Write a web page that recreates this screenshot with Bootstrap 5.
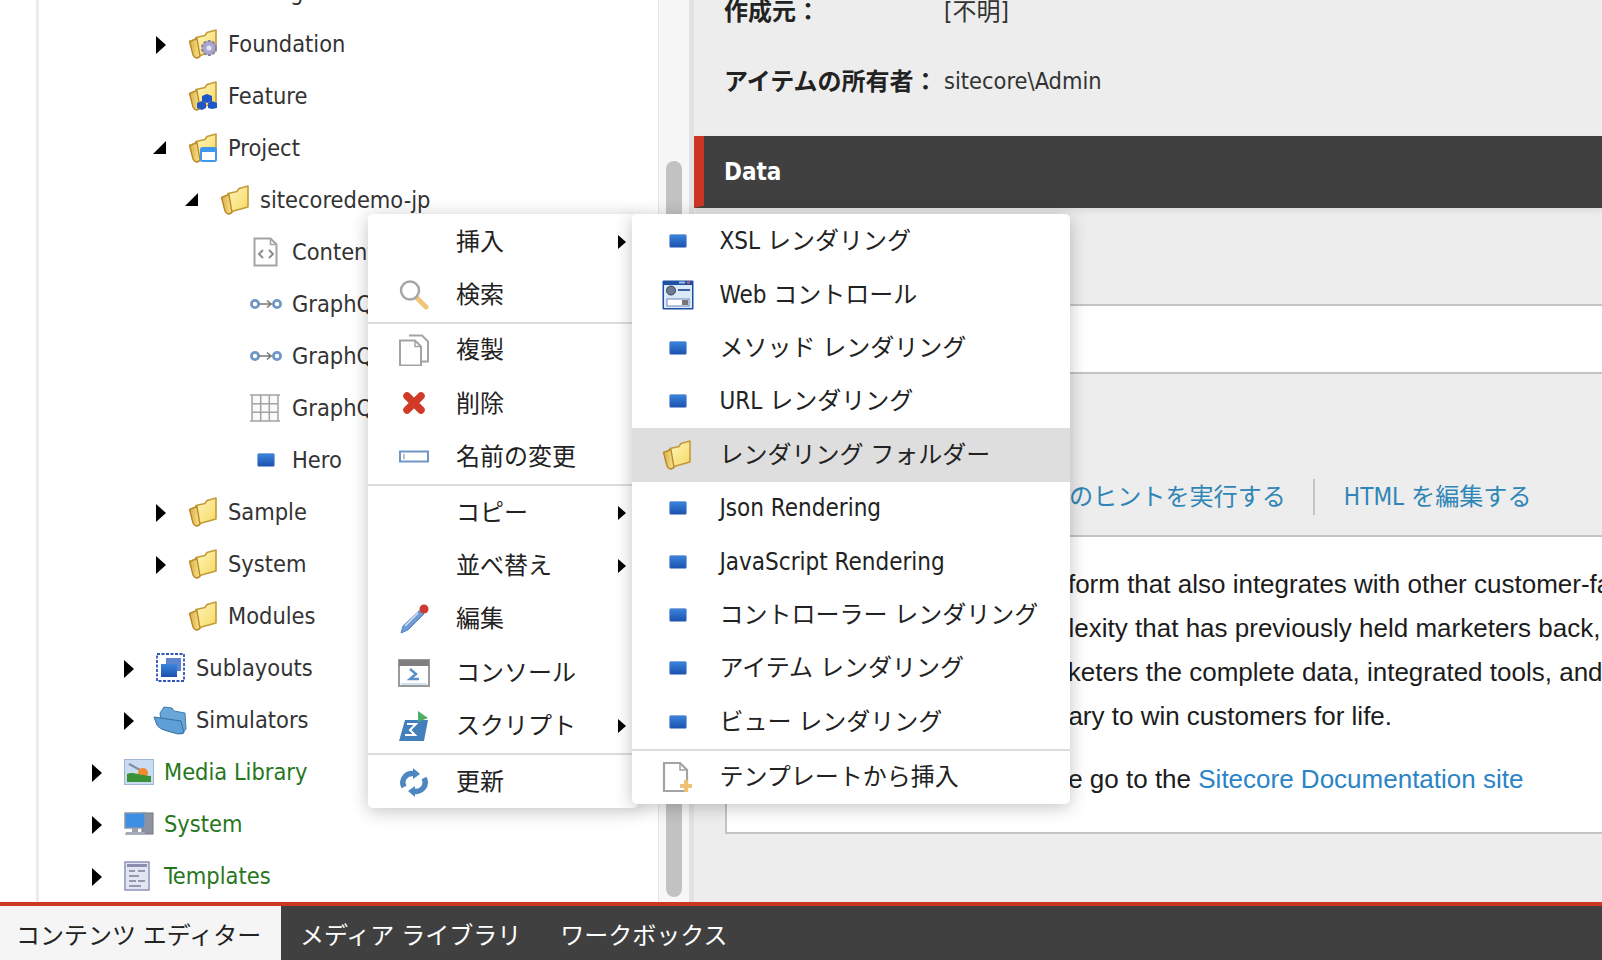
<!DOCTYPE html>
<html lang="ja">

<head>
  <meta charset="UTF-8">
  <title>コンテンツ エディター</title>
  <link href="https://cdn.jsdelivr.net/npm/bootstrap@5.3.3/dist/css/bootstrap.min.css" rel="stylesheet">
  <style>
    html,
    body {
      height: 100%;
      overflow: hidden;
    }

    body {
      font-family: "DejaVu Sans Condensed", "DejaVu Sans", "Noto Sans CJK JP", sans-serif;
      font-size: 23.4px;
      color: #333;
      background: #fff;
    }

    svg {
      filter: blur(.3px);
    }

    .shell-main {
      height: 902px;
      overflow: hidden;
    }

    /* left tree */
    .tree-pane {
      width: 658px;
      flex: none;
      background: linear-gradient(90deg, #fff 36px, #e9e9e9 36px, #f1f1f1 39px, #fff 39px);
      overflow: hidden;
    }

    .tree-list {
      margin-top: -33px;
    }

    .tree-row {
      height: 52px;
      white-space: nowrap;
    }

    .lvl-0 { padding-left: 92px; }
    .lvl-1 { padding-left: 124px; }
    .lvl-2 { padding-left: 156px; }
    .lvl-3 { padding-left: 188px; }
    .lvl-4 { padding-left: 220px; }

    .tree-arrow {
      width: 32px;
      flex: none;
      line-height: 0;
    }

    .arrow-open {
      margin-left: -3px;
      margin-top: -3px;
    }

    .tree-icon {
      width: 40px;
      flex: none;
      line-height: 0;
      margin-top: -3px;
    }

    .icon-left {
      margin-left: -2px;
      margin-right: 2px;
    }

    .icon-wide {
      margin-left: -3px;
      margin-right: 3px;
    }

    .sys-node {
      color: #26761c;
    }

    /* scrollbar strip */
    .scroll-strip {
      width: 36px;
      flex: none;
      background: #f7f7f7;
      border-left: 1px solid #e6e6e6;
      border-right: 5px solid #e2e2e2;
      padding-top: 161px;
      padding-left: 7px;
    }

    .scroll-thumb {
      width: 16px;
      height: 736px;
      background: #c2c2c2;
      border-radius: 8px;
    }

    /* right editor */
    .edit-pane {
      background: #ededed;
      min-width: 0;
      overflow: hidden;
    }

    .info-wrap {
      margin-top: -23px;
      padding-left: 30px;
      height: 159px;
    }

    .info-row {
      height: 70px;
      font-size: 24px;
      white-space: nowrap;
    }

    .info-label {
      width: 220px;
      font-weight: 700;
      color: #222;
      flex: none;
    }

    .info-latin {
      font-size: 23.4px;
    }

    .data-bar {
      height: 72px;
      background: #404040;
      color: #fff;
      font-weight: 700;
      font-size: 24px;
      box-shadow: 0 3px 6px rgba(0, 0, 0, .08);
    }

    .data-flag {
      width: 10px;
      background: #cc3627;
      clip-path: polygon(0 0, 100% 0, 100% 97%, 0 100%);
      margin-right: 20px;
    }

    .field-wrap {
      padding-left: 31px;
    }

    .field-space {
      height: 96px;
    }

    .field-box {
      height: 70px;
      background: #fff;
      border: 2px solid #c4c4c4;
      border-right: 0;
    }

    .link-strip {
      height: 161px;
      padding-bottom: 20px;
    }

    .link-strip a {
      color: #2f86b6;
      text-decoration: none;
      font-size: 24.1px;
      white-space: nowrap;
    }

    .link-first {
      margin-left: 344px;
    }

    .link-sep {
      width: 2px;
      height: 36px;
      background: #c4c4c4;
      margin: 0 29px 0 27px;
    }

    .rich-box {
      height: 299px;
      background: #fff;
      border: 2px solid #c4c4c4;
      border-right: 0;
      padding-top: 25px;
      font-family: "Liberation Sans", Arial, sans-serif;
      font-size: 26px;
      color: #1c1c1c;
    }

    .rich-line {
      height: 44px;
      line-height: 44px;
      white-space: nowrap;
    }

    .rich-line a {
      color: #2a84c6;
      text-decoration: none;
    }

    .ln-a { margin-left: 299px; }
    .ln-b { margin-left: 278px; }
    .ln-c { margin-left: 296px; }
    .ln-d { margin-left: 259px; }
    .ln-e { margin-left: 279px; margin-top: 19px; }

    /* bottom tabs */
    .tab-strip {
      height: 58px;
      background: #404040;
      border-top: 4px solid #cc3627;
      font-size: 24px;
    }

    .tab-strip .nav-link {
      color: #fff;
      padding: 3px 20px 0 19px;
      line-height: 54px;
      white-space: nowrap;
    }

    .tab-strip .nav-link.active {
      width: 281px;
      background: #f5f5f5;
      color: #222;
      padding-left: 16px;
    }

    /* context menus */
    .ctx-menu.dropdown-menu {
      position: absolute;
      top: 214px;
      margin: 0;
      padding: 1px 0 0;
      border: 0;
      border-radius: 5px;
      box-shadow: 0 3px 18px rgba(0, 0, 0, .24);
      font-size: 24px;
      overflow: hidden;
    }

    .ctx-one.dropdown-menu {
      left: 368px;
      width: 270px;
      height: 594px;
      z-index: 1000;
    }

    .ctx-two.dropdown-menu {
      left: 632px;
      width: 438px;
      height: 590px;
      padding-top: .6px;
      z-index: 1001;
    }

    .ctx-menu .dropdown-item {
      height: 53.4px;
      padding: 0 12px 0 30px;
      color: #222;
      white-space: nowrap;
    }

    .ctx-menu .dropdown-item.active {
      background: #dedede;
      color: #222;
    }

    .ctx-menu .dropdown-divider {
      margin: 0;
      border-top: 2px solid #dcdcdc;
      opacity: 1;
    }

    .ctx-icon {
      width: 32px;
      flex: none;
      line-height: 0;
      margin-right: 26px;
    }

    .ctx-two .ctx-icon {
      margin-right: 25.5px;
    }

    .ctx-more {
      margin-left: auto;
      line-height: 0;
    }
  </style>
</head>

<body class="d-flex flex-column">

  <svg width="0" height="0" class="position-absolute">
    <defs>
      <linearGradient id="fy" x1="0" y1="0" x2="1" y2="1">
        <stop offset="0" stop-color="#fff6bf" />
        <stop offset="1" stop-color="#f6d85f" />
      </linearGradient>
      <linearGradient id="ff" x1="0" y1="0" x2="1" y2="0">
        <stop offset="0" stop-color="#d9ad48" />
        <stop offset="1" stop-color="#f8e48a" />
      </linearGradient>
      <linearGradient id="bb" x1="0" y1="0" x2="0" y2="1">
        <stop offset="0" stop-color="#3a86dc" />
        <stop offset="1" stop-color="#1b51ae" />
      </linearGradient>
      <symbol id="i-folder" viewBox="0 0 30 30">
        <path d="M8 8.500l9-2 2-3 9-2.500v21L10 27z" fill="url(#fy)" stroke="#c4993c" stroke-width="1.600" stroke-linejoin="round" />
        <path d="M1.500 12.500l7.500-3 3 18-3 1.500c-2 0-3-1-4-3z" fill="url(#ff)" stroke="#b98a2c" stroke-width="1.400" stroke-linejoin="round" />
      </symbol>
      <symbol id="i-arrow" viewBox="0 0 10 18">
        <path d="M0 0l10 9-10 9z" fill="#000" />
      </symbol>
      <symbol id="i-open" viewBox="0 0 13 13">
        <path d="M13 0v13H0z" fill="#000" />
      </symbol>
      <symbol id="i-more" viewBox="0 0 8 14">
        <path d="M0 0l8 7-8 7z" fill="#000" />
      </symbol>
      <symbol id="i-rend" viewBox="0 0 18 14">
        <rect x=".5" y=".5" width="17" height="13" rx="1.500" fill="url(#bb)" stroke="#8fa6d8" />
      </symbol>
      <symbol id="i-code" viewBox="0 0 26 30">
        <path d="M1.500 1.500h16l6 6v21h-22z" fill="#fff" stroke="#a3a3a3" stroke-width="2" />
        <path d="M17.500 1.500v6h6" fill="none" stroke="#a3a3a3" stroke-width="1.500" />
        <path d="M10 13l-4 4 4 4M16 13l4 4-4 4" fill="none" stroke="#8d8d8d" stroke-width="2" />
      </symbol>
      <symbol id="i-link" viewBox="0 0 32 12">
        <circle cx="5" cy="6" r="3.600" fill="#fff" stroke="#6f97c6" stroke-width="2.800" />
        <circle cx="27" cy="6" r="3.600" fill="#fff" stroke="#6f97c6" stroke-width="2.800" />
        <path d="M9 6h13M17 2.500l4 3.500-4 3.500" fill="none" stroke="#777" stroke-width="1.500" />
      </symbol>
      <symbol id="i-grid" viewBox="0 0 30 30">
        <path d="M2 2h26v26H2zM2 10.700h26M2 19.300h26M10.700 2v26M19.300 2v26M0 2h30M0 28h30" fill="#fafafa" stroke="#a2a2a2" stroke-width="1.500" />
      </symbol>
      <symbol id="i-sub" viewBox="0 0 30 30">
        <rect x="1" y="1" width="27" height="27" fill="#fff" stroke="#2f55b4" stroke-width="1.800" stroke-dasharray="3 1.500" />
        <rect x="10" y="5" width="15" height="13" fill="#5f83cf" />
        <rect x="5" y="11" width="16" height="13" fill="url(#bb)" />
      </symbol>
      <symbol id="i-bluefolder" viewBox="0 0 34 30">
        <path d="M7 8l4-6 8 1 2 3 11 2 1 16-4 5L9 24z" fill="#6aa7d8" stroke="#3f7bae" />
        <path d="M1 12l27 4 3 12-6 1C14 26 6 24 4 20z" fill="#5d9fd6" stroke="#33709f" stroke-linejoin="round" />
      </symbol>
      <symbol id="i-media" viewBox="0 0 30 26">
        <rect x=".5" y=".5" width="29" height="25" fill="#c9dcf1" stroke="#9eb6d4" />
        <path d="M5 5l13 7" stroke="#7f8f9f" stroke-width="2" />
        <circle cx="19" cy="14" r="5" fill="#ef8b2e" />
        <path d="M3 15c6-3 10 1 24 2v6H3z" fill="#3b9136" />
      </symbol>
      <symbol id="i-sys" viewBox="0 0 30 26">
        <rect x="18" y="2" width="11" height="21" fill="#8c92a0" stroke="#777" />
        <rect x="1" y="2" width="20" height="15" fill="#3d8fe4" stroke="#8a95a8" stroke-width="1.500" />
        <path d="M2 21h18l2 3H1z" fill="#a6adba" />
        <rect x="8" y="17" width="6" height="4" fill="#9aa2b0" />
      </symbol>
      <symbol id="i-tmpl" viewBox="0 0 26 30">
        <rect x="1" y="1" width="24" height="28" fill="#e3e6f2" stroke="#8f93bd" stroke-width="1.500" />
        <rect x="3" y="3" width="20" height="3" fill="#8a8fb0" />
        <path d="M5 10h6M14 10h7M5 15h10M5 20h7M14 20h7M5 25h12" stroke="#7b7f99" stroke-width="1.500" />
      </symbol>
      <symbol id="i-find" viewBox="0 0 32 32">
        <path d="M19 19l9 9" stroke="#f0c67e" stroke-width="5" stroke-linecap="round" />
        <circle cx="12" cy="11.500" r="9" fill="#fff" stroke="#a6a6a6" stroke-width="2.500" />
      </symbol>
      <symbol id="i-copy" viewBox="0 0 32 32">
        <path d="M11 1.500h13l6 6v20h-6" fill="#fff" stroke="#a3a3a3" stroke-width="2" />
        <path d="M2 6.500h15l6 6v19H2z" fill="#fff" stroke="#a3a3a3" stroke-width="2" />
        <path d="M17 6.500v6h6" fill="none" stroke="#a3a3a3" stroke-width="1.500" />
      </symbol>
      <symbol id="i-del" viewBox="0 0 32 32">
        <path d="M9 8l14 14M23 8L9 22" stroke="#d13a28" stroke-width="7.500" stroke-linecap="round" />
      </symbol>
      <symbol id="i-ren" viewBox="0 0 32 16">
        <rect x="2" y="2.500" width="28" height="10" fill="#fff" stroke="#6f97c6" stroke-width="2" />
        <path d="M6 5v5" stroke="#aaa" stroke-width="1.500" />
      </symbol>
      <symbol id="i-edit" viewBox="0 0 32 32">
        <path d="M3 30l2-7L22 7l4 4-16 16z" fill="#6f9bd2" stroke="#5a87c0" />
        <path d="M7 23l13-13" stroke="#d7e5f5" stroke-width="1.500" />
        <circle cx="26" cy="6" r="4.500" fill="#d13a33" />
      </symbol>
      <symbol id="i-cons" viewBox="0 0 32 28">
        <rect x="1" y="1" width="30" height="26" fill="#fff" stroke="#9a9a9a" stroke-width="2" />
        <rect x="1" y="1" width="30" height="6" fill="#7f7f7f" />
        <path d="M12 10l6 5-6 5h9" fill="none" stroke="#5d8fca" stroke-width="2.500" />
        <path d="M3 25h26" stroke="#d3e1f2" stroke-width="2" />
      </symbol>
      <symbol id="i-script" viewBox="0 0 32 32">
        <path d="M7 10h23l-4 21H1z" fill="#427fbd" />
        <path d="M9 14h9l-6 6 5 5H7" fill="none" stroke="#fff" stroke-width="2" />
        <path d="M20 1l10 7-10 4z" fill="#4fae63" />
      </symbol>
      <symbol id="i-sync" viewBox="0 0 32 32">
        <path d="M6 21c-4-8 3-15 11-13" fill="none" stroke="#4d86c0" stroke-width="5.500" />
        <path d="M15 2l7 6-7 5z" fill="#4d86c0" />
        <path d="M26 12c4 8-3 15-11 13" fill="none" stroke="#4d86c0" stroke-width="5.500" />
        <path d="M17 31l-7-6 7-5z" fill="#4d86c0" />
      </symbol>
      <symbol id="i-web" viewBox="0 0 32 30">
        <rect x=".5" y=".5" width="31" height="29" rx="1" fill="#1f4fa5" />
        <rect x="2" y="5" width="28" height="23" fill="#dbe8f8" />
        <circle cx="9" cy="10.500" r="4.500" fill="#6e7a8f" stroke="#3a4658" />
        <path d="M16 10h12" stroke="#3a5f9e" stroke-width="2" />
        <rect x="5" y="19" width="22" height="7" fill="#fff" stroke="#6a86b6" />
        <rect x="20" y="20" width="6" height="5" fill="#777" />
        <path d="M25 2.500h3" stroke="#e25b5b" stroke-width="2" />
        <path d="M17 2.500h6" stroke="#9fc0ea" stroke-width="2" />
      </symbol>
      <symbol id="i-newfile" viewBox="0 0 32 32">
        <path d="M2 2h16l7 7v21H2z" fill="#fff" stroke="#a3a3a3" stroke-width="2.200" />
        <path d="M18 2v7h7" fill="none" stroke="#a3a3a3" stroke-width="1.500" />
        <path d="M24 19v12M18 25h12" stroke="#edc274" stroke-width="4" />
      </symbol>
    </defs>
  </svg>

  <div class="shell-main d-flex">
    <div class="tree-pane">
      <div class="tree-list">
        <div class="tree-row d-flex align-items-center lvl-1">
          <span class="tree-arrow"></span>
          <span class="tree-icon"><svg width="18" height="14"><rect width="18" height="14" rx="1" fill="#bccbea" /></svg></span>Renderings
        </div>
        <div class="tree-row d-flex align-items-center lvl-2">
          <span class="tree-arrow"><svg width="10" height="18"><use href="#i-arrow" /></svg></span>
          <span class="tree-icon"><svg width="30" height="30"><use href="#i-folder" /><circle cx="21" cy="19" r="7" fill="#a9a7d2" stroke="#85839f" stroke-width="2" stroke-dasharray="3 1.500" /><circle cx="21" cy="19" r="2.500" fill="#e5e4f2" /></svg></span>Foundation
        </div>
        <div class="tree-row d-flex align-items-center lvl-2">
          <span class="tree-arrow"></span>
          <span class="tree-icon"><svg width="30" height="30"><use href="#i-folder" /><path d="M19 13l5 2v5l-5 2-5-2v-5zM14 20l4 2v5l-4 2-5-2v-5zM24 20l5 2v5l-5 1-4-1v-5z" fill="#1f55c4" /></svg></span>Feature
        </div>
        <div class="tree-row d-flex align-items-center lvl-2">
          <span class="tree-arrow"><svg class="arrow-open" width="13" height="13"><use href="#i-open" /></svg></span>
          <span class="tree-icon"><svg width="30" height="30"><use href="#i-folder" /><rect x="13" y="15" width="15" height="13" rx="1.500" fill="#fff" stroke="#3f98f0" stroke-width="2" /><rect x="13" y="15" width="15" height="4" fill="#3f98f0" /></svg></span>Project
        </div>
        <div class="tree-row d-flex align-items-center lvl-3">
          <span class="tree-arrow"><svg class="arrow-open" width="13" height="13"><use href="#i-open" /></svg></span>
          <span class="tree-icon"><svg width="30" height="30"><use href="#i-folder" /></svg></span>sitecoredemo-jp
        </div>
        <div class="tree-row d-flex align-items-center lvl-4">
          <span class="tree-arrow"></span>
          <span class="tree-icon"><svg width="28" height="30"><use href="#i-code" /></svg></span>Content
        </div>
        <div class="tree-row d-flex align-items-center lvl-4">
          <span class="tree-arrow"></span>
          <span class="tree-icon icon-left"><svg width="32" height="12"><use href="#i-link" /></svg></span>GraphQL
        </div>
        <div class="tree-row d-flex align-items-center lvl-4">
          <span class="tree-arrow"></span>
          <span class="tree-icon icon-left"><svg width="32" height="12"><use href="#i-link" /></svg></span>GraphQL
        </div>
        <div class="tree-row d-flex align-items-center lvl-4">
          <span class="tree-arrow"></span>
          <span class="tree-icon icon-left"><svg width="30" height="30"><use href="#i-grid" /></svg></span>GraphQL
        </div>
        <div class="tree-row d-flex align-items-center lvl-4">
          <span class="tree-arrow"></span>
          <span class="tree-icon icon-left"><svg width="32" height="14"><use href="#i-rend" /></svg></span>Hero
        </div>
        <div class="tree-row d-flex align-items-center lvl-2">
          <span class="tree-arrow"><svg width="10" height="18"><use href="#i-arrow" /></svg></span>
          <span class="tree-icon"><svg width="30" height="30"><use href="#i-folder" /></svg></span>Sample
        </div>
        <div class="tree-row d-flex align-items-center lvl-2">
          <span class="tree-arrow"><svg width="10" height="18"><use href="#i-arrow" /></svg></span>
          <span class="tree-icon"><svg width="30" height="30"><use href="#i-folder" /></svg></span>System
        </div>
        <div class="tree-row d-flex align-items-center lvl-2">
          <span class="tree-arrow"></span>
          <span class="tree-icon"><svg width="30" height="30"><use href="#i-folder" /></svg></span>Modules
        </div>
        <div class="tree-row d-flex align-items-center lvl-1">
          <span class="tree-arrow"><svg width="10" height="18"><use href="#i-arrow" /></svg></span>
          <span class="tree-icon"><svg width="30" height="30"><use href="#i-sub" /></svg></span>Sublayouts
        </div>
        <div class="tree-row d-flex align-items-center lvl-1">
          <span class="tree-arrow"><svg width="10" height="18"><use href="#i-arrow" /></svg></span>
          <span class="tree-icon icon-wide"><svg width="34" height="30"><use href="#i-bluefolder" /></svg></span>Simulators
        </div>
        <div class="tree-row d-flex align-items-center lvl-0 sys-node">
          <span class="tree-arrow"><svg width="10" height="18"><use href="#i-arrow" /></svg></span>
          <span class="tree-icon"><svg width="30" height="26"><use href="#i-media" /></svg></span>Media Library
        </div>
        <div class="tree-row d-flex align-items-center lvl-0 sys-node">
          <span class="tree-arrow"><svg width="10" height="18"><use href="#i-arrow" /></svg></span>
          <span class="tree-icon"><svg width="30" height="26"><use href="#i-sys" /></svg></span>System
        </div>
        <div class="tree-row d-flex align-items-center lvl-0 sys-node">
          <span class="tree-arrow"><svg width="10" height="18"><use href="#i-arrow" /></svg></span>
          <span class="tree-icon"><svg width="26" height="30"><use href="#i-tmpl" /></svg></span>Templates
        </div>
      </div>
    </div>

    <div class="scroll-strip">
      <div class="scroll-thumb"></div>
    </div>

    <div class="edit-pane flex-grow-1">
      <div class="info-wrap">
        <div class="info-row d-flex align-items-center"><span class="info-label">作成元：</span>[不明]</div>
        <div class="info-row d-flex align-items-center"><span class="info-label">アイテムの所有者：</span><span class="info-latin">sitecore\Admin</span></div>
      </div>
      <div class="data-bar d-flex align-items-stretch">
        <span class="data-flag"></span>
        <span class="align-self-center">Data</span>
      </div>
      <div class="field-wrap">
        <div class="field-space"></div>
        <div class="field-box"></div>
        <div class="link-strip d-flex align-items-end">
          <a href="#" class="link-first">のヒントを実行する</a>
          <span class="link-sep"></span>
          <a href="#">HTML を編集する</a>
        </div>
        <div class="rich-box">
          <div class="rich-line ln-a">platform that also integrates with other customer-facing</div>
          <div class="rich-line ln-b">complexity that has previously held marketers back,</div>
          <div class="rich-line ln-c">marketers the complete data, integrated tools, and</div>
          <div class="rich-line ln-d">necessary to win customers for life.</div>
          <div class="rich-line ln-e">please go to the <a href="#">Sitecore Documentation site</a></div>
        </div>
      </div>
    </div>
  </div>

  <nav class="nav tab-strip flex-nowrap">
    <a class="nav-link active" href="#">コンテンツ エディター</a>
    <a class="nav-link" href="#">メディア ライブラリ</a>
    <a class="nav-link" href="#">ワークボックス</a>
  </nav>

  <div class="dropdown-menu show ctx-menu ctx-one">
    <a class="dropdown-item d-flex align-items-center" href="#"><span class="ctx-icon"></span>挿入<span class="ctx-more"><svg width="8" height="14"><use href="#i-more" /></svg></span></a>
    <a class="dropdown-item d-flex align-items-center" href="#"><span class="ctx-icon"><svg width="32" height="32"><use href="#i-find" /></svg></span>検索</a>
    <hr class="dropdown-divider">
    <a class="dropdown-item d-flex align-items-center" href="#"><span class="ctx-icon"><svg width="32" height="32"><use href="#i-copy" /></svg></span>複製</a>
    <a class="dropdown-item d-flex align-items-center" href="#"><span class="ctx-icon"><svg width="32" height="32"><use href="#i-del" /></svg></span>削除</a>
    <a class="dropdown-item d-flex align-items-center" href="#"><span class="ctx-icon"><svg width="32" height="16"><use href="#i-ren" /></svg></span>名前の変更</a>
    <hr class="dropdown-divider">
    <a class="dropdown-item d-flex align-items-center" href="#"><span class="ctx-icon"></span>コピー<span class="ctx-more"><svg width="8" height="14"><use href="#i-more" /></svg></span></a>
    <a class="dropdown-item d-flex align-items-center" href="#"><span class="ctx-icon"></span>並べ替え<span class="ctx-more"><svg width="8" height="14"><use href="#i-more" /></svg></span></a>
    <a class="dropdown-item d-flex align-items-center" href="#"><span class="ctx-icon"><svg width="32" height="32"><use href="#i-edit" /></svg></span>編集</a>
    <a class="dropdown-item d-flex align-items-center" href="#"><span class="ctx-icon"><svg width="32" height="28"><use href="#i-cons" /></svg></span>コンソール</a>
    <a class="dropdown-item d-flex align-items-center" href="#"><span class="ctx-icon"><svg width="32" height="32"><use href="#i-script" /></svg></span>スクリプト<span class="ctx-more"><svg width="8" height="14"><use href="#i-more" /></svg></span></a>
    <hr class="dropdown-divider">
    <a class="dropdown-item d-flex align-items-center" href="#"><span class="ctx-icon"><svg width="32" height="32"><use href="#i-sync" /></svg></span>更新</a>
  </div>

  <div class="dropdown-menu show ctx-menu ctx-two">
    <a class="dropdown-item d-flex align-items-center" href="#"><span class="ctx-icon text-center"><svg width="18" height="14"><use href="#i-rend" /></svg></span>XSL レンダリング</a>
    <a class="dropdown-item d-flex align-items-center" href="#"><span class="ctx-icon"><svg width="32" height="30"><use href="#i-web" /></svg></span>Web コントロール</a>
    <a class="dropdown-item d-flex align-items-center" href="#"><span class="ctx-icon text-center"><svg width="18" height="14"><use href="#i-rend" /></svg></span>メソッド レンダリング</a>
    <a class="dropdown-item d-flex align-items-center" href="#"><span class="ctx-icon text-center"><svg width="18" height="14"><use href="#i-rend" /></svg></span>URL レンダリング</a>
    <a class="dropdown-item d-flex align-items-center active" href="#"><span class="ctx-icon"><svg width="30" height="30"><use href="#i-folder" /></svg></span>レンダリング フォルダー</a>
    <a class="dropdown-item d-flex align-items-center" href="#"><span class="ctx-icon text-center"><svg width="18" height="14"><use href="#i-rend" /></svg></span>Json Rendering</a>
    <a class="dropdown-item d-flex align-items-center" href="#"><span class="ctx-icon text-center"><svg width="18" height="14"><use href="#i-rend" /></svg></span>JavaScript Rendering</a>
    <a class="dropdown-item d-flex align-items-center" href="#"><span class="ctx-icon text-center"><svg width="18" height="14"><use href="#i-rend" /></svg></span>コントローラー レンダリング</a>
    <a class="dropdown-item d-flex align-items-center" href="#"><span class="ctx-icon text-center"><svg width="18" height="14"><use href="#i-rend" /></svg></span>アイテム レンダリング</a>
    <a class="dropdown-item d-flex align-items-center" href="#"><span class="ctx-icon text-center"><svg width="18" height="14"><use href="#i-rend" /></svg></span>ビュー レンダリング</a>
    <hr class="dropdown-divider">
    <a class="dropdown-item d-flex align-items-center" href="#"><span class="ctx-icon"><svg width="32" height="32"><use href="#i-newfile" /></svg></span>テンプレートから挿入</a>
  </div>

  <script src="https://cdn.jsdelivr.net/npm/bootstrap@5.3.3/dist/js/bootstrap.bundle.min.js"></script>
</body>

</html>
